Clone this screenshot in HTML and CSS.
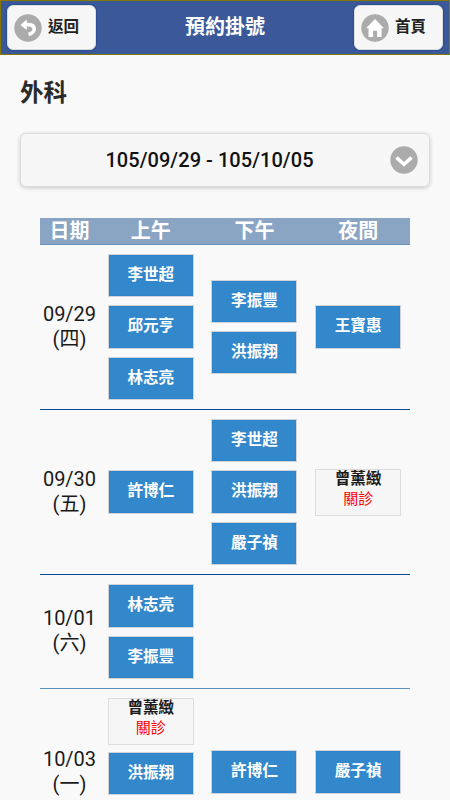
FILE: index.html
```html
<!DOCTYPE html>
<html lang="zh-Hant">
<head>
  <meta charset="UTF-8" />
  <meta name="viewport" content="width=device-width, initial-scale=1.0" />
  <title>預約掛號</title>
  <link rel="stylesheet" href="styles.css">
</head>
<body>
  <header class="header">
    <button class="nav-btn" type="button">
      <svg class="icon" viewBox="0 0 28 28">
        <circle cx="14" cy="14" r="13.7" />
        <path class="line" d="M12 10.6h2.500c3.600 0 5.700 1.800 5.700 4.500 0 2.700-2 4.500-5.700 5.500" />
        <path class="fill" d="M6.300 11l6.500-5.500v10.500z" />
      </svg>
      <span>返回</span>
    </button>
    <h1>預約掛號</h1>
    <button class="nav-btn" type="button">
      <svg class="icon" viewBox="0 0 28 28">
        <circle cx="14" cy="14" r="13.7" />
        <path class="fill" d="M14 5L5 14.200h2.500V23h4.600v-6.300h4V23h4.500v-8.800H23z" />
      </svg>
      <span>首頁</span>
    </button>
  </header>

  <main class="content">
    <h2>外科</h2>
    <button class="select" type="button">
      <span>105/09/29 - 105/10/05</span>
      <svg class="icon" viewBox="0 0 28 28">
        <circle cx="14" cy="14" r="13.7" />
        <path class="line" d="M6.500 11.500l7.500 6.800 7.500-6.800" />
      </svg>
    </button>

    <div class="schedule">
      <div class="row head">
        <div>日期</div>
        <div>上午</div>
        <div>下午</div>
        <div>夜間</div>
      </div>
      <div class="row">
        <div class="date">09/29<br>(四)</div>
        <div class="cell">
          <button class="doctor" type="button">李世超</button>
          <button class="doctor" type="button">邱元亨</button>
          <button class="doctor" type="button">林志亮</button>
        </div>
        <div class="cell">
          <button class="doctor" type="button">李振豐</button>
          <button class="doctor" type="button">洪振翔</button>
        </div>
        <div class="cell">
          <button class="doctor" type="button">王寶惠</button>
        </div>
      </div>
      <div class="row">
        <div class="date">09/30<br>(五)</div>
        <div class="cell">
          <button class="doctor" type="button">許博仁</button>
        </div>
        <div class="cell">
          <button class="doctor" type="button">李世超</button>
          <button class="doctor" type="button">洪振翔</button>
          <button class="doctor" type="button">嚴子禎</button>
        </div>
        <div class="cell">
          <div class="closed">曾薰緻<span>關診</span></div>
        </div>
      </div>
      <div class="row short">
        <div class="date">10/01<br>(六)</div>
        <div class="cell">
          <button class="doctor" type="button">林志亮</button>
          <button class="doctor" type="button">李振豐</button>
        </div>
        <div class="cell"></div>
        <div class="cell"></div>
      </div>
      <div class="row last">
        <div class="date">10/03<br>(一)</div>
        <div class="cell top">
          <div class="closed">曾薰緻<span>關診</span></div>
          <button class="doctor" type="button">洪振翔</button>
        </div>
        <div class="cell">
          <button class="doctor" type="button">許博仁</button>
        </div>
        <div class="cell">
          <button class="doctor" type="button">嚴子禎</button>
        </div>
      </div>
    </div>
  </main>
</body>
</html>
```
FILE: styles.css
```css
* {
  box-sizing: border-box;
}

html {
  overflow: hidden;
}

body {
  margin: 0;
  height: 800px;
  overflow: hidden;
  background: #f9f9f9;
  color: #1a1a1a;
  font-family: Roboto, "Noto Sans CJK TC", sans-serif;
}

button {
  font-family: inherit;
  cursor: pointer;
}

.header {
  display: flex;
  justify-content: space-between;
  height: 55px;
  padding: 4px 6px 0;
  border: 1px solid #857800;
  background: #3b5998;
}

.header h1 {
  margin: 0;
  color: #fff;
  font-size: 20px;
  line-height: 44px;
}

.nav-btn {
  display: flex;
  align-items: center;
  gap: 6px;
  width: 89px;
  height: 45px;
  padding: 0 0 0 6px;
  border: 1px solid #ddd;
  border-radius: 6px;
  background: #f6f6f6;
  box-shadow: 0 0 2px #00328a;
  color: #222;
  font-size: 15.5px;
  font-weight: 700;
}

.nav-btn span {
  padding-bottom: 5px;
}

.icon {
  flex: none;
  width: 28px;
  height: 28px;
}

.icon circle {
  fill: #ababab;
}

.icon .fill {
  fill: #fff;
}

.icon .line {
  fill: none;
  stroke: #fff;
  stroke-width: 3.6;
}

.content {
  padding: 0 20px;
}

.content h2 {
  margin: 20px 0 22px;
  color: #2a2a2a;
  font-size: 23.5px;
  font-weight: 700;
  line-height: 36px;
}

.select {
  display: flex;
  align-items: center;
  width: 100%;
  height: 54px;
  padding: 0 11px 0 8px;
  border: 1px solid #ddd;
  border-radius: 6px;
  background: #f6f6f6;
  box-shadow: 0 1px 4px rgba(0, 0, 0, 0.2);
  color: #111;
  font-size: 20px;
  font-weight: 500;
  letter-spacing: 0.05px;
}

.select span {
  flex: 1;
  padding-bottom: 1px;
  text-align: center;
}

.schedule {
  margin: 31px 20px 0;
}

.row {
  display: grid;
  grid-template-columns: 59px repeat(3, 1fr);
  align-items: center;
  height: 165px;
  border-bottom: 1px solid #044e94;
}

.row.head {
  height: 27px;
  border-bottom: 1px solid #6b94bf;
  background: #8aa4c4;
  color: #fff;
  font-size: 20px;
  font-weight: 700;
  line-height: 24px;
  text-align: center;
}

.row.short {
  height: 114px;
  border-color: #5d8fbd;
}

.row.last {
  height: 166px;
  border: 0;
}

.date {
  padding-bottom: 1px;
  font-size: 20px;
  line-height: 25px;
  text-align: center;
}

.cell {
  display: flex;
  flex-direction: column;
  align-items: center;
  gap: 8px;
}

.cell.top {
  align-self: start;
  gap: 7px;
  padding-top: 9px;
}

.doctor {
  width: 86px;
  height: 43.3px;
  padding: 0 0 5px;
  border: 1px solid #d0d3da;
  background: #3388cc;
  box-shadow: inset 0 0 1px #0074c8;
  color: #fff;
  font-size: 15.6px;
  font-weight: 700;
}

.closed {
  width: 86px;
  height: 47px;
  border: 1px solid #ddd;
  background: #f6f6f6;
  font-size: 15.6px;
  font-weight: 700;
  line-height: 18px;
  text-align: center;
}

.closed span {
  display: block;
  color: #f00;
  font-size: 15px;
  font-weight: 400;
  line-height: 22px;
}
```
